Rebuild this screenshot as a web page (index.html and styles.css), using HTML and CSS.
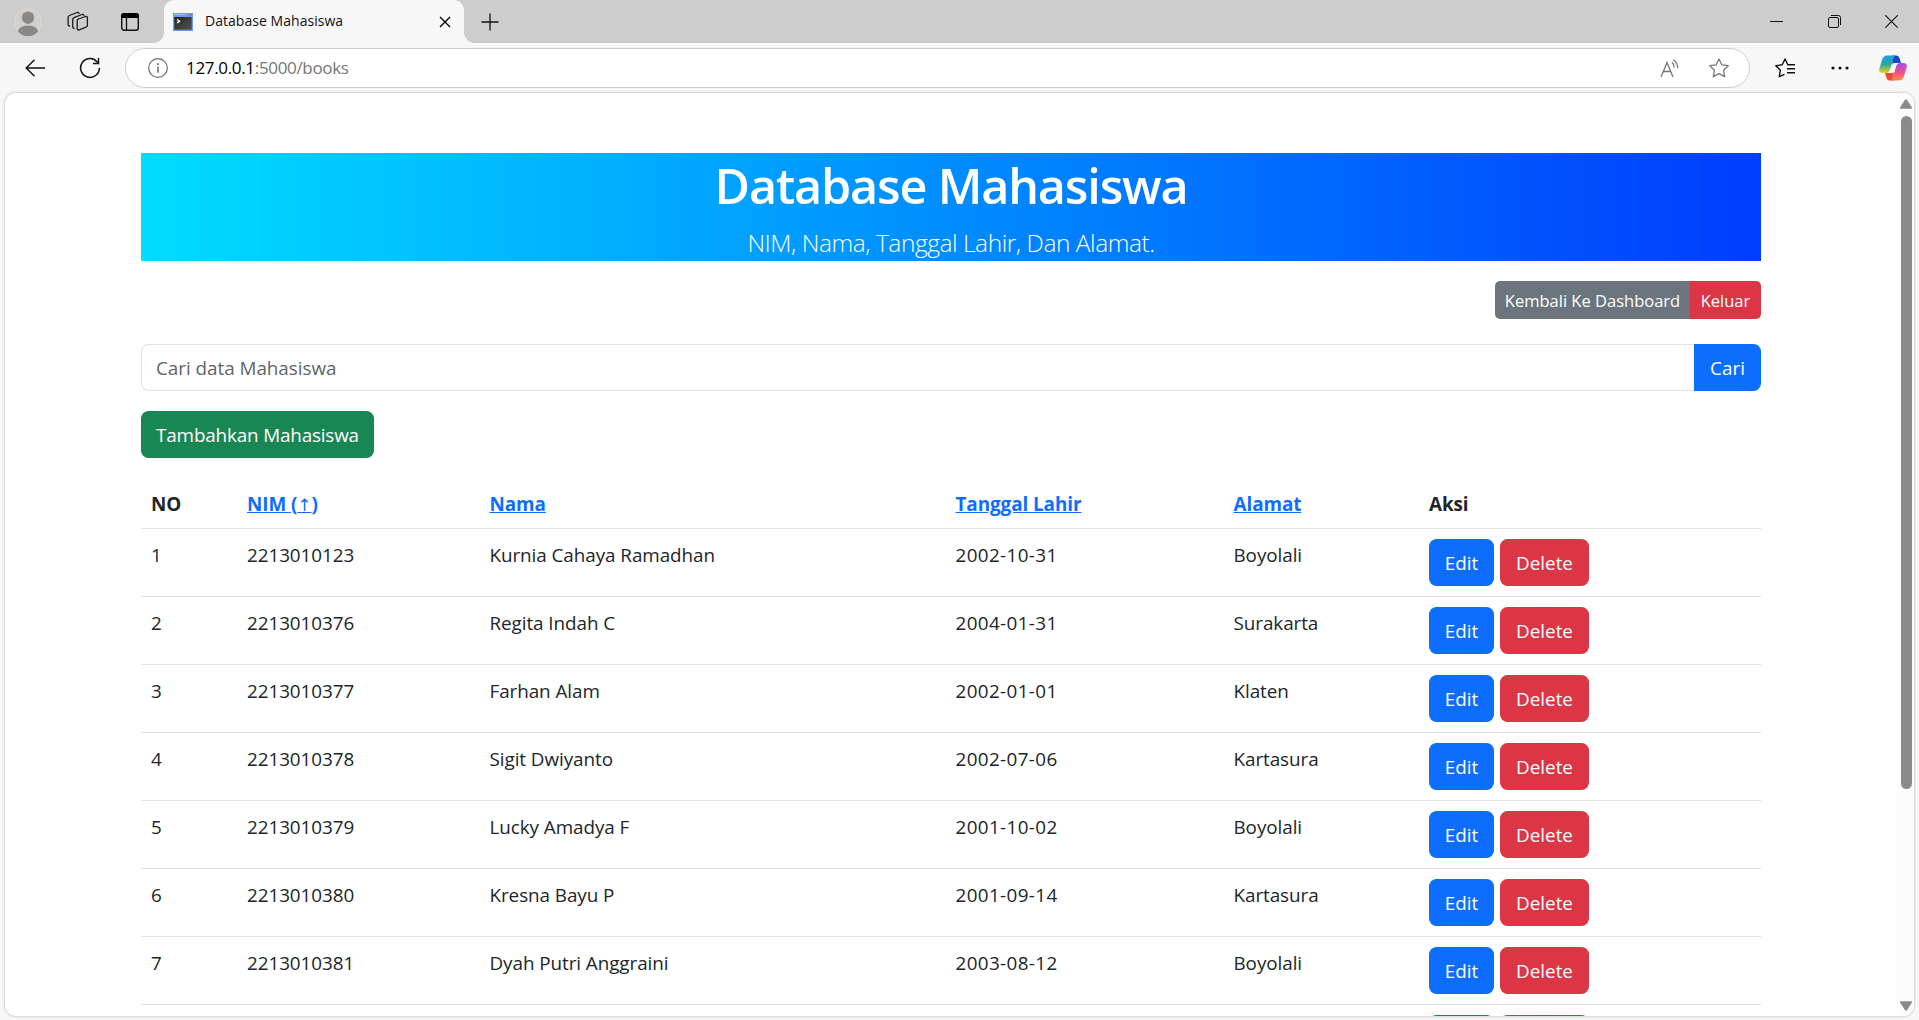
FILE: index.html
```html
<!DOCTYPE html>
<html lang="id">
<head>
<meta charset="utf-8">
<title>Database Mahasiswa</title>
<link rel="stylesheet" href="styles.css">
</head>
<body>
<div class="window">
  <header class="tabstrip">
    <svg class="avatar" width="28" height="28" viewBox="0 0 28 28"><circle cx="14" cy="14" r="13.3" fill="#d1cfcb" stroke="#dddbd8"/><circle cx="14" cy="9.7" r="6.2" fill="#8a8785"/><path d="M4 23.5c0-3 4-6 10-6s10 3 10 6a13 13 0 0 1-20 0z" fill="#8a8785"/></svg>
    <svg class="workspaces" width="22" height="22" viewBox="0 0 22 22" fill="none" stroke="#1b1b1b" stroke-width="1.3" stroke-linejoin="round" stroke-linecap="round"><path d="M10.200 9.500Q10.200 8.500 11.500 8l7-2.500q1.900-.5 1.900 1.300v7.400q0 1.400-1.300 1.900l-7 2.700q-1.900.7-1.900-1.300z"/><path d="M7.200 17.300q-1.500 0-1.500-1.600V8.500q0-1.400 1.300-1.900l8-3.100q1.300-.4 1.900.8"/><path d="M2.600 15q-1.500 0-1.500-1.600V6.400q0-1.400 1.300-1.900l7.700-3q1.300-.4 1.900.8"/></svg>
    <svg class="panes" width="18" height="18" viewBox="0 0 18 18"><rect x=".7" y=".7" width="16.600" height="16.600" rx="2.500" fill="none" stroke="#111" stroke-width="1.400"/><path d="M0 5V3a3 3 0 0 1 3-3h12a3 3 0 0 1 3 3v2z" fill="#000"/><path d="M5.500 5v12" stroke="#111" stroke-width="1.300"/></svg>
    <div class="tab">
      <svg class="favicon" width="20" height="18" viewBox="0 0 20 18"><defs><linearGradient id="term" x2="1" y2="1"><stop stop-color="#222"/><stop offset="1" stop-color="#555"/></linearGradient></defs><rect width="20" height="18" fill="#6b9be0"/><rect x="1.300" y="4" width="17.400" height="12.700" fill="url(#term)"/><path d="M1 1.500h12" stroke="#9dc1f3"/><path d="M16.500 1.800h2" stroke="#e0526a" stroke-width="1.500"/><path d="M4 6.500l2.500 1.700L4 10" fill="none" stroke="#fff" stroke-width="1.500"/></svg>
      <span class="tab-title">Database Mahasiswa</span>
      <svg class="tab-close" width="12" height="12" viewBox="0 0 12 12" stroke="#000" stroke-width="1.400"><path d="M1 1l10 10M11 1L1 11"/></svg>
    </div>
    <svg class="newtab" width="18" height="18" viewBox="0 0 18 18" stroke="#111" stroke-width="1.300"><path d="M9 .5v17M.5 9h17"/></svg>
    <div class="controls">
      <svg width="13" height="13" viewBox="0 0 13 13" stroke="#111"><path d="M0 6.500h13"/></svg>
      <svg width="13" height="13" viewBox="0 0 13 13" fill="none" stroke="#111"><rect x=".5" y="2.500" width="10" height="10" rx="1.500"/><path d="M3 .5h7.500a2 2 0 0 1 2 2V10"/></svg>
      <svg width="13" height="13" viewBox="0 0 13 13" stroke="#111" stroke-width="1.100"><path d="M.3.3l12.400 12.400M12.700.3L.3 12.700"/></svg>
    </div>
  </header>
  <nav class="toolbar">
    <svg class="back" width="20" height="18" viewBox="0 0 20 18" fill="none" stroke="#111" stroke-width="1.400"><path d="M9.500.7L1.200 9l8.300 8.300M1.200 9H20"/></svg>
    <svg class="reload" width="22" height="22" viewBox="0 0 22 22" fill="none" stroke="#111" stroke-width="1.500"><path d="M20.400 11A9.400 9.400 0 1 1 18 4.700l1.300 1.500"/><path d="M19.500 1v5.500H14"/></svg>
    <div class="address">
      <svg class="info" width="20" height="20" viewBox="0 0 20 20" fill="none" stroke="#6b6b6b" stroke-width="1.200"><circle cx="10" cy="10" r="9.300"/><path d="M10 8.500v6.300" stroke-width="1.500"/><path d="M10 5.200v1.800" stroke-width="1.800"/></svg>
      <span class="url">127.0.0.1<span class="path">:5000/books</span></span>
      <svg class="read" width="20" height="19" viewBox="0 0 20 19" fill="none" stroke="#767676" stroke-width="1.300"><path d="M1 18L7 3.500 13 18M3.300 12.500h7.400M11.800 3.300q2.400 1.800 2.500 5.200M13.300.8q4.300 3 4.500 8.500"/></svg>
      <svg class="star" width="20" height="20" viewBox="0 0 20 20" fill="none" stroke="#767676" stroke-width="1.300" stroke-linejoin="round"><path d="M10 1l2.800 5.800 6.400.9-4.600 4.500 1.100 6.400L10 15.600l-5.700 3 1.100-6.400L.8 7.700l6.400-.9z"/></svg>
    </div>
    <svg class="favs" width="20" height="20" viewBox="0 0 20 20" fill="none" stroke="#111" stroke-width="1.400" stroke-linejoin="round"><path d="M9.500 16.300L4.300 18.700l1.100-6.500L.8 7.700l6.400-.9L10 1l2.800 5.800h7.200M12 10.700h8M12 14.700h8"/></svg>
    <svg class="more" width="18" height="4" viewBox="0 0 18 4" fill="#111"><circle cx="2" cy="2" r="1.600"/><circle cx="9" cy="2" r="1.600"/><circle cx="16" cy="2" r="1.600"/></svg>
    <svg class="copilot" width="28" height="26" viewBox="0 0 28 26"><defs><linearGradient id="cl" x2="0" y2="1"><stop stop-color="#1a9df0"/><stop offset=".5" stop-color="#28a79d"/><stop offset="1" stop-color="#f5d014"/></linearGradient><linearGradient id="cr" x2="0" y2="1"><stop stop-color="#a34df0"/><stop offset=".5" stop-color="#ea4f8d"/><stop offset="1" stop-color="#ff8a4c"/></linearGradient></defs><path d="M13 .5h4.500q2.300 0 3 2.500L22 8h-5q-2.500 0-3.500 3z" fill="#1846c8"/><path d="M15 25.500h-4.500q-2.300 0-3-2.500L6 18h5q2.500 0 3.500-3z" fill="#f04a36"/><path d="M8 .5h9q-2 .5-3 4l-3 10q-1 3.500-4 3.500H4q-5 0-3.500-5L3 5Q4.500.5 8 .5z" fill="url(#cl)"/><path d="M20 25.500h-9q2-.5 3-4l3-10Q18 8 21 8h3q5 0 3.500 5L25 21q-1.500 4.500-5 4.500z" fill="url(#cr)"/><path d="M13.800 8.800Q14.600 8 17 8h2.500Q17.600 8.600 17 11l-1.600 5.500q-.6 1.500-3 1.500H8.800q1.800-.8 2.400-3.200z" fill="#fff"/></svg>
  </nav>
  <main class="viewport">
    <div class="page">
      <div class="banner">
        <h1>Database Mahasiswa</h1>
        <p>NIM, Nama, Tanggal Lahir, Dan Alamat.</p>
      </div>
      <div class="actions"><a class="btn-sm grey">Kembali Ke Dashboard</a><a class="btn-sm red">Keluar</a></div>
      <form class="search"><div class="field">Cari data Mahasiswa</div><a class="btn blue">Cari</a></form>
      <a class="btn green">Tambahkan Mahasiswa</a>
      <div class="table">
        <div class="row head"><span>NO</span><a>NIM (<i>↑</i>)</a><a>Nama</a><a>Tanggal Lahir</a><a>Alamat</a><span>Aksi</span></div>
        <div class="row"><span>1</span><span>2213010123</span><span>Kurnia Cahaya Ramadhan</span><span class="date">2002-10-31</span><span>Boyolali</span><div class="ops"><a class="btn blue">Edit</a><a class="btn red">Delete</a></div></div>
        <div class="row"><span>2</span><span>2213010376</span><span>Regita Indah C</span><span class="date">2004-01-31</span><span>Surakarta</span><div class="ops"><a class="btn blue">Edit</a><a class="btn red">Delete</a></div></div>
        <div class="row"><span>3</span><span>2213010377</span><span>Farhan Alam</span><span class="date">2002-01-01</span><span>Klaten</span><div class="ops"><a class="btn blue">Edit</a><a class="btn red">Delete</a></div></div>
        <div class="row"><span>4</span><span>2213010378</span><span>Sigit Dwiyanto</span><span class="date">2002-07-06</span><span>Kartasura</span><div class="ops"><a class="btn blue">Edit</a><a class="btn red">Delete</a></div></div>
        <div class="row"><span>5</span><span>2213010379</span><span>Lucky Amadya F</span><span class="date">2001-10-02</span><span>Boyolali</span><div class="ops"><a class="btn blue">Edit</a><a class="btn red">Delete</a></div></div>
        <div class="row"><span>6</span><span>2213010380</span><span>Kresna Bayu P</span><span class="date">2001-09-14</span><span>Kartasura</span><div class="ops"><a class="btn blue">Edit</a><a class="btn red">Delete</a></div></div>
        <div class="row"><span>7</span><span>2213010381</span><span>Dyah Putri Anggraini</span><span class="date">2003-08-12</span><span>Boyolali</span><div class="ops"><a class="btn blue">Edit</a><a class="btn red">Delete</a></div></div>
        <div class="row"><span></span><span></span><span></span><span></span><span></span><div class="ops"><a class="btn blue"></a><a class="btn red"></a></div></div>
      </div>
    </div>
    <div class="scrollbar">
      <svg width="12" height="10" viewBox="0 0 12 10" fill="#8a8a8a"><path d="M5 .8q1-1.300 2 0l4.800 7.400q.7 1.500-.8 1.500H1Q-.5 9.700.2 8.200z"/></svg>
      <div class="thumb"></div>
      <svg width="12" height="10" viewBox="0 0 12 10" fill="#8a8a8a"><path d="M5 9.200q1 1.300 2 0l4.800-7.400Q12.500.3 11 .3H1Q-.5.3.2 1.800z"/></svg>
    </div>
  </main>
</div>
</body>
</html>
```
FILE: styles.css
```css
* { box-sizing: border-box; }
body { margin: 0; font-family: "Open Sans", "Noto Sans", sans-serif; color: #212529; }
svg { display: block; flex: none; }
.window { width: 1919px; height: 1020px; display: flex; flex-direction: column; background: #f7f7f7; overflow: hidden; }

.tabstrip { height: 43px; flex: none; display: flex; align-items: center; background: #cdcdcd; padding-left: 14px; }
.workspaces { margin-left: 25px; }
.panes { margin-left: 32px; }
.tab { position: relative; width: 300px; height: 43px; margin-left: 25px; padding: 0 13px 0 9px; display: flex; align-items: center; background: #f7f7f7; border-radius: 10px 10px 0 0; }
.tab::before, .tab::after { content: ""; position: absolute; bottom: 0; width: 10px; height: 10px; }
.tab::before { left: -10px; background: radial-gradient(circle at 0 0, transparent 9.500px, #f7f7f7 10px); }
.tab::after { right: -10px; background: radial-gradient(circle at 100% 0, transparent 9.500px, #f7f7f7 10px); }
.tab-title { flex: 1; margin-left: 12px; padding-bottom: 2px; font-size: 14px; color: #111; white-space: nowrap; letter-spacing: 0.04px; }
.newtab { margin-left: 17px; }
.controls { margin-left: auto; display: flex; gap: 44.500px; padding-right: 21px; }

.toolbar { height: 49px; flex: none; display: flex; align-items: center; padding: 0 12px 0 25px; }
.reload { margin-left: 34px; }
.address { width: 1625px; height: 40px; margin: 1px 0 0 24px; border: 1px solid #cfcfcf; border-radius: 20px; background: #fff; display: flex; align-items: center; padding: 0 20px 0 22px; }
.url { flex: 1; margin-left: 18px; padding-bottom: 2px; font-size: 17px; letter-spacing: -0.33px; color: #000; }
.path { color: #767676; }
.star { margin-left: 29px; }
.favs { margin-left: 25px; }
.more { margin-left: 36px; }
.copilot { margin-left: auto; }

.viewport { margin: 1px 5px 0; height: 923px; display: flex; background: #fff; border-radius: 11px; overflow: hidden; box-shadow: 0 0 3px rgba(0,0,0,.3); }
.page { flex: 1; padding: 60px 136px 0 136px; }
.banner { height: 107.500px; background: linear-gradient(to right, #00ddff, #003cff); color: #fff; text-align: center; }
h1 { margin: 0; padding-top: 2px; font-size: 48.500px; font-weight: 600; line-height: 60px; letter-spacing: -1.150px; }
.banner p { margin: 0; padding-top: 9px; font-size: 24.500px; font-weight: 300; line-height: 37.500px; letter-spacing: -0.45px; }
.actions { display: flex; justify-content: flex-end; margin-top: 20px; }
.btn-sm { height: 38px; line-height: 39px; font-size: 16.500px; text-align: center; color: #fff; white-space: nowrap; }
.btn-sm.grey { width: 195px; border-radius: 5px 0 0 5px; background: #6c757d; }
.btn-sm.red { width: 71px; border-radius: 0 5px 5px 0; }
.search { display: flex; margin: 25px 0 20px; }
.field { flex: 1; height: 47px; line-height: 47px; border: 1px solid #dee2e6; border-right: 0; border-radius: 7.500px 0 0 7.500px; padding-left: 14px; font-size: 18.850px; letter-spacing: -0.03px; color: #5f6469; }
.btn { display: block; height: 47px; line-height: 49px; border-radius: 7.500px; font-size: 18.850px; color: #fff; text-align: center; white-space: nowrap; }
.search .btn { width: 67px; border-radius: 0 7.500px 7.500px 0; }
.blue { background: #0d6efd; }
.red { background: #dc3545; }
.green { width: 233px; background: #198754; letter-spacing: -0.16px; }
.table { margin-top: 20px; font-size: 18.850px; line-height: 30px; }
.row { height: 68px; padding: 10px 0 0 10px; display: grid; grid-template-columns: 96px 242.500px 466px 278px 195.500px 1fr; align-items: start; border-bottom: 1px solid #dee2e6; white-space: nowrap; }
.row > span, .row > a { padding-top: 1px; letter-spacing: -0.06px; }
.row > .date { letter-spacing: 0.38px; }
.head { height: 51px; font-weight: 700; }
.head a { color: #0d6efd; text-decoration: underline; justify-self: start; }
.head i { font-style: normal; font-weight: 400; font-family: "DejaVu Sans", sans-serif; font-size: 17px; line-height: 1; }
.ops { display: flex; gap: 6px; }
.ops .blue { width: 65px; }
.ops .red { width: 89px; }
.scrollbar { width: 17px; background: #fcfcfc; padding: 6px 2px 5px 3px; display: flex; flex-direction: column; align-items: center; }
.thumb { width: 11px; height: 673px; margin: 7px 0 auto; border-radius: 6px; background: #8a8a8a; }
```
